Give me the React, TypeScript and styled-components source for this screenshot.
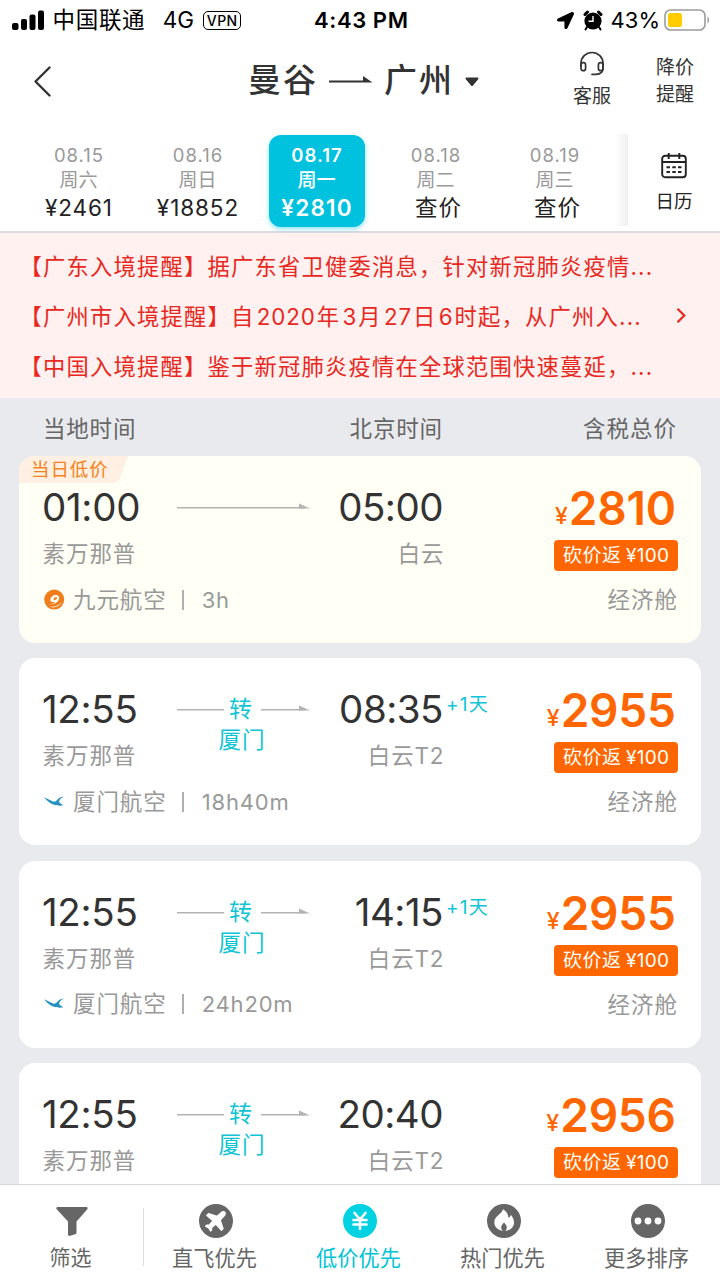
import React from "react";
import styled, { createGlobalStyle, css } from "styled-components";
import { FaLocationArrow } from "react-icons/fa";

const GlobalStyle = createGlobalStyle`
  * { box-sizing: border-box; }
  body {
    margin: 0;
    background: #fff;
    font-family: Inter, "Noto Sans CJK SC", sans-serif;
    color: #333;
  }
`;

const Screen = styled.div`
  width: 720px;
  height: 1280px;
  display: flex;
  flex-direction: column;
  overflow: hidden;
  background: #fff;
`;

/* A single line whose last glyph carries no trailing tracking. */
const Text = styled.span<{
  $size: number;
  $line?: number;
  $track?: number;
  $weight?: number;
  $color?: string;
}>`
  display: block;
  white-space: nowrap;
  font-size: ${(p) => p.$size}px;
  line-height: ${(p) => p.$line ?? 28}px;
  letter-spacing: ${(p) => p.$track ?? 0}px;
  margin-right: ${(p) => -(p.$track ?? 0)}px;
  font-weight: ${(p) => p.$weight ?? 400};
  color: ${(p) => p.$color ?? "inherit"};
`;

/* Latin digits set inside Chinese text, with a little air around them. */
const Digits = styled.span`
  letter-spacing: 0.9px;
  margin: 0 1px 0 2.3px;
`;

const StatusBar = styled.div`
  height: 40px;
  flex: none;
  display: grid;
  grid-template-columns: 1fr auto 1fr;
  align-items: center;
  padding: 0 10px 0 12px;
  color: #000;
`;

const StatusGroup = styled.div<{ $end?: boolean }>`
  display: flex;
  align-items: center;
  justify-content: ${(p) => (p.$end ? "flex-end" : "flex-start")};
`;

const Carrier = styled.div`
  margin: 0 18px 0 8.5px;
`;

const VpnBadge = styled.div`
  width: 38px;
  height: 19px;
  margin-left: 9px;
  border: 1.6px solid #000;
  border-radius: 5px;
  display: flex;
  align-items: center;
  justify-content: center;
`;

const StatusItem = styled.div<{ $gap: number }>`
  display: flex;
  margin-right: ${(p) => p.$gap}px;
`;

const Header = styled.header`
  height: 86px;
  flex: none;
  display: grid;
  grid-template-columns: 248px 1fr 140px 75px;
`;

const BackButton = styled.div`
  padding: 26px 0 0 33px;
`;

const Title = styled.h1`
  margin: 0;
  padding-top: 20px;
  display: flex;
  height: 60px;
  align-items: center;
`;

const TitleArrow = styled.svg`
  margin: 0 11px 0 13px;
`;

const TitleCaret = styled.svg`
  margin: 3px 0 0 13px;
`;

const HeaderAction = styled.div<{ $top: number; $left: number }>`
  display: flex;
  flex-direction: column;
  padding: ${(p) => p.$top}px 0 0 ${(p) => p.$left}px;
`;

const HeaderIcon = styled.svg`
  margin: 0 0 7px 6px;
`;

const DateStrip = styled.nav`
  height: 107px;
  flex: none;
  display: flex;
  border-bottom: 2px solid #dcdce0;
  padding-left: 19px;
`;

const DateCell = styled.div`
  width: 119px;
  padding-top: 9px;
  display: flex;
  justify-content: center;
`;

const DateTile = styled.div<{ $active?: boolean }>`
  width: 96px;
  height: 92px;
  padding-top: 8px;
  display: flex;
  flex-direction: column;
  align-items: center;
  border-radius: 12px;
  color: #999;
  ${(p) =>
    p.$active &&
    css`
      color: #fff;
      background: #00c2de;
      box-shadow: 0 2px 5px rgba(0, 194, 222, 0.45);
    `}
`;

const DateFare = styled.div<{ $shift: boolean }>`
  display: flex;
  padding-left: ${(p) => (p.$shift ? 5 : 0)}px;
`;

const StripEdge = styled.div`
  width: 14px;
  height: 92px;
  margin-top: 8px;
  background: linear-gradient(to right, #fff, #f0f0f1);
`;

const CalendarButton = styled.div`
  flex: 1;
  padding-top: 26px;
  display: flex;
  flex-direction: column;
  align-items: center;
  gap: 8px;
  color: #222;
`;

const Notices = styled.section`
  height: 165px;
  flex: none;
  display: flex;
  align-items: center;
  justify-content: space-between;
  padding: 3px 34px 0 19.5px;
  background: #fff1ef;
`;

const NoticeList = styled.div`
  display: flex;
  flex-direction: column;
`;

const NoticeChevron = styled.svg`
  margin-bottom: 2px;
`;

const Results = styled.main`
  flex: 1;
  min-height: 0;
  overflow: hidden;
  padding: 0 19px;
  background: #e9eaee;
`;

const ColumnLabels = styled.div`
  height: 58px;
  display: flex;
  align-items: center;
  padding: 4px 25px 0 24px;
  color: #666;
`;

const LabelSlot = styled.div<{ $width: number }>`
  width: ${(p) => p.$width}px;
  flex: none;
  display: flex;
  justify-content: flex-end;
  &:first-child {
    justify-content: flex-start;
  }
`;

const CardList = styled.div`
  display: flex;
  flex-direction: column;
  gap: 15.4px;
`;

const Card = styled.article<{ $best?: boolean }>`
  position: relative;
  height: 187px;
  flex: none;
  overflow: hidden;
  padding: 27px 23px 0;
  display: flex;
  justify-content: space-between;
  border-radius: 16px;
  background: ${(p) => (p.$best ? "#fffff5" : "#fff")};
`;

const BestRibbon = styled.div`
  position: absolute;
  left: 0;
  top: 0;
  width: 109px;
  height: 27px;
  padding-left: 12px;
  background: #fff0e3;
  clip-path: polygon(0 0, 100% 0, 92% 90%, 88% 100%, 0 100%);
`;

const Itinerary = styled.div`
  display: grid;
  grid-template-columns: 135px 133px 133.5px 50px;
  grid-template-rows: 48px 46px 45px;
`;

const Cell = styled.div<{ $end?: boolean; $inset?: number }>`
  display: flex;
  align-items: center;
  justify-content: ${(p) => (p.$end ? "flex-end" : "flex-start")};
  padding-left: ${(p) => p.$inset ?? 0}px;
`;

const Route = styled.div`
  grid-row: span 2;
  display: flex;
  flex-direction: column;
  align-items: center;
`;

const RouteLine = styled.div`
  width: 133px;
  height: 48px;
  display: flex;
  align-items: center;
  justify-content: space-between;
`;

const RouteStop = styled.div`
  margin-left: -4px;
`;

const RouteVia = styled.div`
  margin: -7px 0 0 -4px;
`;

const NextDay = styled.div`
  padding: 5px 0 0 2.5px;
`;

const Airline = styled.div`
  grid-column: 1 / -1;
  display: flex;
  align-items: center;
`;

const AirlineLogo = styled.svg`
  margin: 0 8px 0 1px;
`;

const Bar = styled.div`
  width: 2px;
  height: 20px;
  margin: 0 18px 0 16px;
  background: #b0b0b0;
`;

const Fare = styled.div`
  display: flex;
  flex-direction: column;
  align-items: flex-end;
`;

const Price = styled.div`
  height: 48px;
  margin: 1px 2px 0 0;
  display: flex;
  align-items: flex-end;
  color: #ff6600;
`;

const Currency = styled.div`
  margin: 0 1px 2px 0;
`;

const RebateTag = styled.div`
  width: 124px;
  height: 31px;
  margin-top: 8px;
  padding-top: 1px;
  display: flex;
  align-items: center;
  justify-content: center;
  gap: 5px;
  border-radius: 4px;
  background: #ff6600;
  color: #fff;
`;

const Cabin = styled.div`
  margin: 15px 1px 0 0;
`;

const TabBar = styled.footer`
  height: 96px;
  flex: none;
  display: flex;
  border-top: 1px solid #d8d8da;
  background: #fff;
`;

const Tab = styled.div<{ $active?: boolean; $divided?: boolean }>`
  position: relative;
  width: 144px;
  padding-top: 19px;
  display: flex;
  flex-direction: column;
  align-items: center;
  gap: 4px;
  color: ${(p) => (p.$active ? "#00c4d6" : "#666")};
  ${(p) =>
    p.$divided &&
    css`
      &::after {
        content: "";
        position: absolute;
        right: 0;
        top: 23px;
        width: 1px;
        height: 58px;
        background: #ddd;
      }
    `}
`;

const TabLabel = styled.div`
  padding-right: 3px;
`;

const TabDisc = styled.div<{ $color?: string }>`
  width: 34px;
  height: 34px;
  display: flex;
  align-items: center;
  justify-content: center;
  border-radius: 50%;
  background: ${(p) => p.$color ?? "transparent"};
  color: #fff;
`;

type Day = { date: string; day: string; fare: string; active?: boolean };

const days: Day[] = [
  { date: "08.15", day: "周六", fare: "¥2461" },
  { date: "08.16", day: "周日", fare: "¥18852" },
  { date: "08.17", day: "周一", fare: "¥2810", active: true },
  { date: "08.18", day: "周二", fare: "查价" },
  { date: "08.19", day: "周三", fare: "查价" },
];

const notices = [
  "【广东入境提醒】据广东省卫健委消息，针对新冠肺炎疫情...",
  "【广州市入境提醒】自2020年3月27日6时起，从广州入...",
  "【中国入境提醒】鉴于新冠肺炎疫情在全球范围快速蔓延，...",
];

type Flight = {
  depart: string;
  arrive: string;
  nextDay?: boolean;
  terminal: string;
  via?: string;
  carrier?: { name: string; logo: "nine" | "xiamen"; duration: string };
  cabin?: string;
  price: string;
  best?: boolean;
};

const flights: Flight[] = [
  { depart: "01:00", arrive: "05:00", terminal: "白云", carrier: { name: "九元航空", logo: "nine", duration: "3h" }, cabin: "经济舱", price: "2810", best: true },
  { depart: "12:55", arrive: "08:35", nextDay: true, terminal: "白云T2", via: "厦门", carrier: { name: "厦门航空", logo: "xiamen", duration: "18h40m" }, cabin: "经济舱", price: "2955" },
  { depart: "12:55", arrive: "14:15", nextDay: true, terminal: "白云T2", via: "厦门", carrier: { name: "厦门航空", logo: "xiamen", duration: "24h20m" }, cabin: "经济舱", price: "2955" },
  { depart: "12:55", arrive: "20:40", terminal: "白云T2", via: "厦门", price: "2956" },
];

const SignalIcon = () => (
  <svg width="32" height="21" viewBox="0 0 32 21">
    <rect x="0" y="13" width="6.500" height="7" rx="2" />
    <rect x="9" y="9" width="6" height="11" rx="2" />
    <rect x="17.500" y="4.500" width="6" height="15.500" rx="2" />
    <rect x="26" y="0.500" width="6" height="19.500" rx="2" />
  </svg>
);

const AlarmIcon = () => (
  <svg width="20" height="21" viewBox="0 0 20 21">
    <circle cx="10" cy="11" r="8.600" />
    <path d="M2 4.500 4.500 2M18 4.500 15.500 2" stroke="#000" strokeWidth="3" strokeLinecap="round" />
    <path d="M4 17 2.500 19.500M16 17l1.500 2.500" stroke="#000" strokeWidth="2" strokeLinecap="round" />
    <path d="M10 6v5.200H5.500" fill="none" stroke="#fff" strokeWidth="1.400" />
  </svg>
);

const BatteryIcon = () => (
  <svg width="46" height="22" viewBox="0 0 46 22">
    <rect x="1" y="1" width="40" height="20" rx="5.500" fill="#fff" stroke="#9b9b9b" strokeWidth="1.600" />
    <rect x="4" y="4" width="14" height="14" rx="2.500" fill="#fc0" />
    <path d="M43.500 7.500c2 1 2 6 0 7z" fill="#9b9b9b" />
  </svg>
);

const HeadsetIcon = () => (
  <HeaderIcon width="26" height="25" viewBox="0 0 26 25" fill="none" stroke="#333" strokeWidth="1.700">
    <path d="M2 15V12.500a11 11 0 0 1 22 0V17c0 4-2.500 6.300-7 6.300H13" strokeLinecap="round" />
    <rect x="2" y="11.700" width="4.600" height="8" rx="2.300" />
    <rect x="19.400" y="11.700" width="4.600" height="8" rx="2.300" />
  </HeaderIcon>
);

const CalendarIcon = () => (
  <svg width="26" height="27" viewBox="0 0 26 27" fill="none" stroke="#222" strokeWidth="1.900">
    <rect x="1.200" y="3.700" width="23.600" height="21.500" rx="3" />
    <path d="M1.200 10h23.600M7.700 1v6M18.300 1v6" />
    <path d="M5.500 15.300h3.500M11.300 15.300h3.500M17 15.300h3.500M5.500 20h3.500M11.300 20h3.500M17 20h3.500" />
  </svg>
);

const RouteArrow = ({ width, head }: { width: number; head: boolean }) => (
  <svg width={width} height="10" viewBox={`0 0 ${width} 10`}>
    <rect x="0" y="5" width={width - (head ? 5 : 0)} height="1.500" fill="#b3b3b3" />
    {head && <path d={`M${width - 11} 1.500 ${width} 6.500H${width - 11}z`} fill="#b3b3b3" />}
  </svg>
);

const NineLogo = () => (
  <AirlineLogo width="22" height="22" viewBox="0 0 22 22">
    <circle cx="11.200" cy="10.600" r="10" fill="#f07c1c" />
    <path d="M7.300 10.500c.6-3 3.300-4.700 5.800-4.500 2.800.2 3.800 2.500 2.600 5-1.600 3.300-5.500 4.700-10.200 4.300 2.900-.3 5.200-1.100 6.700-2.400-2.700.6-5.300-.2-4.900-2.400z" fill="#fffff5" />
    <ellipse cx="12.300" cy="9.600" rx="2" ry="1.200" transform="rotate(-35 12.300 9.600)" fill="#f07c1c" />
    <path d="M5 17.300c5 1.400 10.500 0 14-4.300-2.600 5-8.500 6.800-14 4.300z" fill="#fffff5" />
  </AirlineLogo>
);

const XiamenLogo = () => (
  <AirlineLogo width="22" height="12" viewBox="0 0 22 12">
    <path d="M1.200 1.200 9.500 5.200c1.500.8 3 .6 4.100-.6C15.500 2.500 17.300 1 20.800.6c-2.400 1.200-3.700 2.600-4.600 4.400-.4 1 .1 1.700 1.200 2.300l2.800 2c-2.400.6-4.700.5-6.500-.3C9 9 4.200 5.500 1.200 1.200z" fill="#2692c3" />
  </AirlineLogo>
);

const FilterIcon = () => (
  <svg width="32" height="30" viewBox="0 0 32 30" fill="#666">
    <path d="M1.700 1H30.300c1.300 0 1.700 1.300 1 2.200L20.500 15.500v11c0 1-.5 1.500-1.300 1.800l-5 1.500c-1.200.3-2.200-.3-2.200-1.500V15.500L.7 3.200C0 2.300.4 1 1.700 1z" />
  </svg>
);

const PlaneIcon = () => (
  <svg width="34" height="34" viewBox="0 0 34 34" fill="#fff" stroke="#fff" strokeWidth="1.200" strokeLinejoin="round">
    <path d="M26 8.500c.7.900.3 2-.6 3L21.200 16l2.900 8.600-1.700 1.800-5.600-6.400-4.300 3.800.2 2.100-1.100 1.100-1.900-3.100-3.100-1.700 1.300-1.200 2.200.1 3.800-4.200-6.200-5.500 1.800-1.800 8.700 2.700 4.500-4.200c1-.9 2.500-.5 3.300.4z" />
  </svg>
);

const YenIcon = () => (
  <svg width="20" height="20" viewBox="0 0 20 20" fill="none" stroke="#fff" strokeWidth="2.600" strokeLinecap="round">
    <path d="M4.500 2 10 8.500 15.500 2M10 8.500V18M3.500 9h13M3.500 13.500h13" />
  </svg>
);

const FlameIcon = () => (
  <svg width="34" height="34" viewBox="0 0 34 34">
    <path d="M16 5.300c3.600 2.400 5.300 5 5.400 8.400 1.300-.5 2.100-1.500 2.500-3 2.100 2.500 3.100 5 3.100 7.900 0 5-4.200 8.400-9.700 8.400S7.300 23.600 7.300 18.600c0-3.600 2-5.600 4.700-8 1.900-1.600 3.400-3 4-5.300z" fill="#fff" />
    <path d="M17 18.500c1.700 1.800 2.800 3.200 2.800 5 0 2-1.200 3.500-2.800 4-1.600-.5-2.800-2-2.800-4 0-1.800 1.100-3.200 2.800-5z" fill="#666" />
  </svg>
);

const DotsIcon = () => (
  <svg width="28" height="8" viewBox="0 0 28 8" fill="#fff">
    <circle cx="4" cy="4" r="3.400" />
    <circle cx="14" cy="4" r="3.400" />
    <circle cx="24" cy="4" r="3.400" />
  </svg>
);

const withDigits = (text: string) =>
  text.split(/(\d+)/).map((part, i) => (/^\d+$/.test(part) ? <Digits key={i}>{part}</Digits> : part));

const FlightCard = ({ flight }: { flight: Flight }) => (
  <Card $best={flight.best}>
    {flight.best && (
      <BestRibbon>
        <Text $size={18.5} $line={27} $track={0.9} $color="#f58220">当日低价</Text>
      </BestRibbon>
    )}
    <Itinerary>
      <Cell>
        <Text $size={38.5} $line={48} $track={-0.3}>{flight.depart}</Text>
      </Cell>
      <Route>
        <RouteLine>
          {flight.via ? (
            <>
              <RouteArrow width={47} head={false} />
              <RouteStop>
                <Text $size={23} $line={46} $color="#0fc4d4">转</Text>
              </RouteStop>
              <RouteArrow width={49} head />
            </>
          ) : (
            <RouteArrow width={133} head />
          )}
        </RouteLine>
        {flight.via && (
          <RouteVia>
            <Text $size={22.5} $line={28} $track={1} $color="#0fc4d4">{flight.via}</Text>
          </RouteVia>
        )}
      </Route>
      <Cell $end>
        <Text $size={38.5} $line={48} $track={-0.5}>{flight.arrive}</Text>
      </Cell>
      <NextDay>
        {flight.nextDay && <Text $size={19} $line={30} $track={1.2} $color="#0fc4d4">+1天</Text>}
      </NextDay>
      <Cell $inset={0.6}>
        <Text $size={22.5} $track={0.9} $color="#999">素万那普</Text>
      </Cell>
      <Cell $end>
        <Text $size={22.5} $track={0.8} $color="#999">{flight.terminal}</Text>
      </Cell>
      {flight.carrier && (
        <Airline>
          {flight.carrier.logo === "nine" ? <NineLogo /> : <XiamenLogo />}
          <Text $size={22.5} $track={0.9} $color="#999">{flight.carrier.name}</Text>
          <Bar />
          <Text $size={22} $track={0.8} $color="#999">{flight.carrier.duration}</Text>
        </Airline>
      )}
    </Itinerary>
    <Fare>
      <Price>
        <Currency>
          <Text $size={23} $line={28} $weight={500}>¥</Text>
        </Currency>
        <Text $size={46} $line={48} $weight={600} $track={-0.2}>{flight.price}</Text>
      </Price>
      <RebateTag>
        <Text $size={19} $track={0.5}>砍价返</Text>
        <Text $size={19} $track={0.3}>¥100</Text>
      </RebateTag>
      {flight.cabin && (
        <Cabin>
          <Text $size={22.5} $track={1} $color="#999">{flight.cabin}</Text>
        </Cabin>
      )}
    </Fare>
  </Card>
);

export default function App() {
  return (
    <Screen>
      <GlobalStyle />
      <StatusBar>
        <StatusGroup>
          <SignalIcon />
          <Carrier>
            <Text $size={22.5} $track={0.7}>中国联通</Text>
          </Carrier>
          <Text $size={22.5}>4G</Text>
          <VpnBadge>
            <Text $size={14} $line={15} $weight={500} $track={0.5}>VPN</Text>
          </VpnBadge>
        </StatusGroup>
        <Text $size={22} $weight={600} $track={0.6}>4:43 PM</Text>
        <StatusGroup $end>
          <StatusItem $gap={9}>
            <FaLocationArrow size={17} />
          </StatusItem>
          <StatusItem $gap={8}>
            <AlarmIcon />
          </StatusItem>
          <StatusItem $gap={4}>
            <Text $size={22}>43%</Text>
          </StatusItem>
          <BatteryIcon />
        </StatusGroup>
      </StatusBar>

      <Header>
        <BackButton>
          <svg width="20" height="32" viewBox="0 0 20 32" fill="none" stroke="#333" strokeWidth="2.400" strokeLinecap="round" strokeLinejoin="round">
            <path d="M16.500 1.500 2.500 15.500l14 14" />
          </svg>
        </BackButton>
        <Title>
          <Text $size={33} $line={44} $weight={500} $track={2}>曼谷</Text>
          <TitleArrow width="44" height="8" viewBox="0 0 44 8">
            <path d="M0 4.500H34V0L43.500 6.500H0z" fill="#333" />
          </TitleArrow>
          <Text $size={33} $line={44} $weight={500} $track={2}>广州</Text>
          <TitleCaret width="14" height="10" viewBox="0 0 14 10">
            <path d="M1.500.500h11c1 0 1.300 1 .7 1.700L8 8.500c-.6.700-1.400.700-2 0L.8 2.200C.2 1.500.5.500 1.500.500z" fill="#333" />
          </TitleCaret>
        </Title>
        <HeaderAction $top={11} $left={68}>
          <HeadsetIcon />
          <Text $size={19} $line={27}>客服</Text>
        </HeaderAction>
        <HeaderAction $top={14} $left={11}>
          <Text $size={19} $line={27}>降价</Text>
          <Text $size={19} $line={27}>提醒</Text>
        </HeaderAction>
      </Header>

      <DateStrip>
        {days.map((d) => (
          <DateCell key={d.date}>
            <DateTile $active={d.active}>
              <Text $size={18.5} $line={25} $track={1} $weight={d.active ? 600 : 400}>{d.date}</Text>
              <Text $size={19} $line={26} $weight={d.active ? 500 : 400}>{d.day}</Text>
              <DateFare $shift={d.fare === "查价"}>
                <Text
                  $size={22.5}
                  $line={28}
                  $track={d.active ? 1.2 : 0.9}
                  $weight={d.active ? 600 : 400}
                  $color={d.active ? "#fff" : "#222"}
                >
                  {d.fare}
                </Text>
              </DateFare>
            </DateTile>
          </DateCell>
        ))}
        <StripEdge />
        <CalendarButton>
          <CalendarIcon />
          <Text $size={18.5} $line={28}>日历</Text>
        </CalendarButton>
      </DateStrip>

      <Notices>
        <NoticeList>
          {notices.map((n) => (
            <Text key={n} $size={22.3} $line={50} $track={1.2} $color="#e8281e">{withDigits(n)}</Text>
          ))}
        </NoticeList>
        <NoticeChevron width="10" height="18" viewBox="0 0 10 18" fill="none" stroke="#e8281e" strokeWidth="2.200">
          <path d="M1.500 1.800 8.300 8.500 1.500 15.200" />
        </NoticeChevron>
      </Notices>

      <Results>
        <ColumnLabels>
          <LabelSlot $width={134}>
            <Text $size={22.5} $track={0.8}>当地时间</Text>
          </LabelSlot>
          <LabelSlot $width={265}>
            <Text $size={22.5} $track={0.8}>北京时间</Text>
          </LabelSlot>
          <LabelSlot $width={234}>
            <Text $size={22.5} $track={1}>含税总价</Text>
          </LabelSlot>
        </ColumnLabels>
        <CardList>
          {flights.map((f, i) => (
            <FlightCard key={i} flight={f} />
          ))}
        </CardList>
      </Results>

      <TabBar>
        <Tab $divided>
          <TabDisc>
            <FilterIcon />
          </TabDisc>
          <TabLabel>
            <Text $size={21} $line={32}>筛选</Text>
          </TabLabel>
        </Tab>
        <Tab>
          <TabDisc $color="#666">
            <PlaneIcon />
          </TabDisc>
          <TabLabel>
            <Text $size={21.2} $line={32}>直飞优先</Text>
          </TabLabel>
        </Tab>
        <Tab $active>
          <TabDisc $color="#00d2e2">
            <YenIcon />
          </TabDisc>
          <TabLabel>
            <Text $size={21.2} $line={32}>低价优先</Text>
          </TabLabel>
        </Tab>
        <Tab>
          <TabDisc $color="#666">
            <FlameIcon />
          </TabDisc>
          <TabLabel>
            <Text $size={21.2} $line={32}>热门优先</Text>
          </TabLabel>
        </Tab>
        <Tab>
          <TabDisc $color="#666">
            <DotsIcon />
          </TabDisc>
          <TabLabel>
            <Text $size={21.2} $line={32}>更多排序</Text>
          </TabLabel>
        </Tab>
      </TabBar>
    </Screen>
  );
}
